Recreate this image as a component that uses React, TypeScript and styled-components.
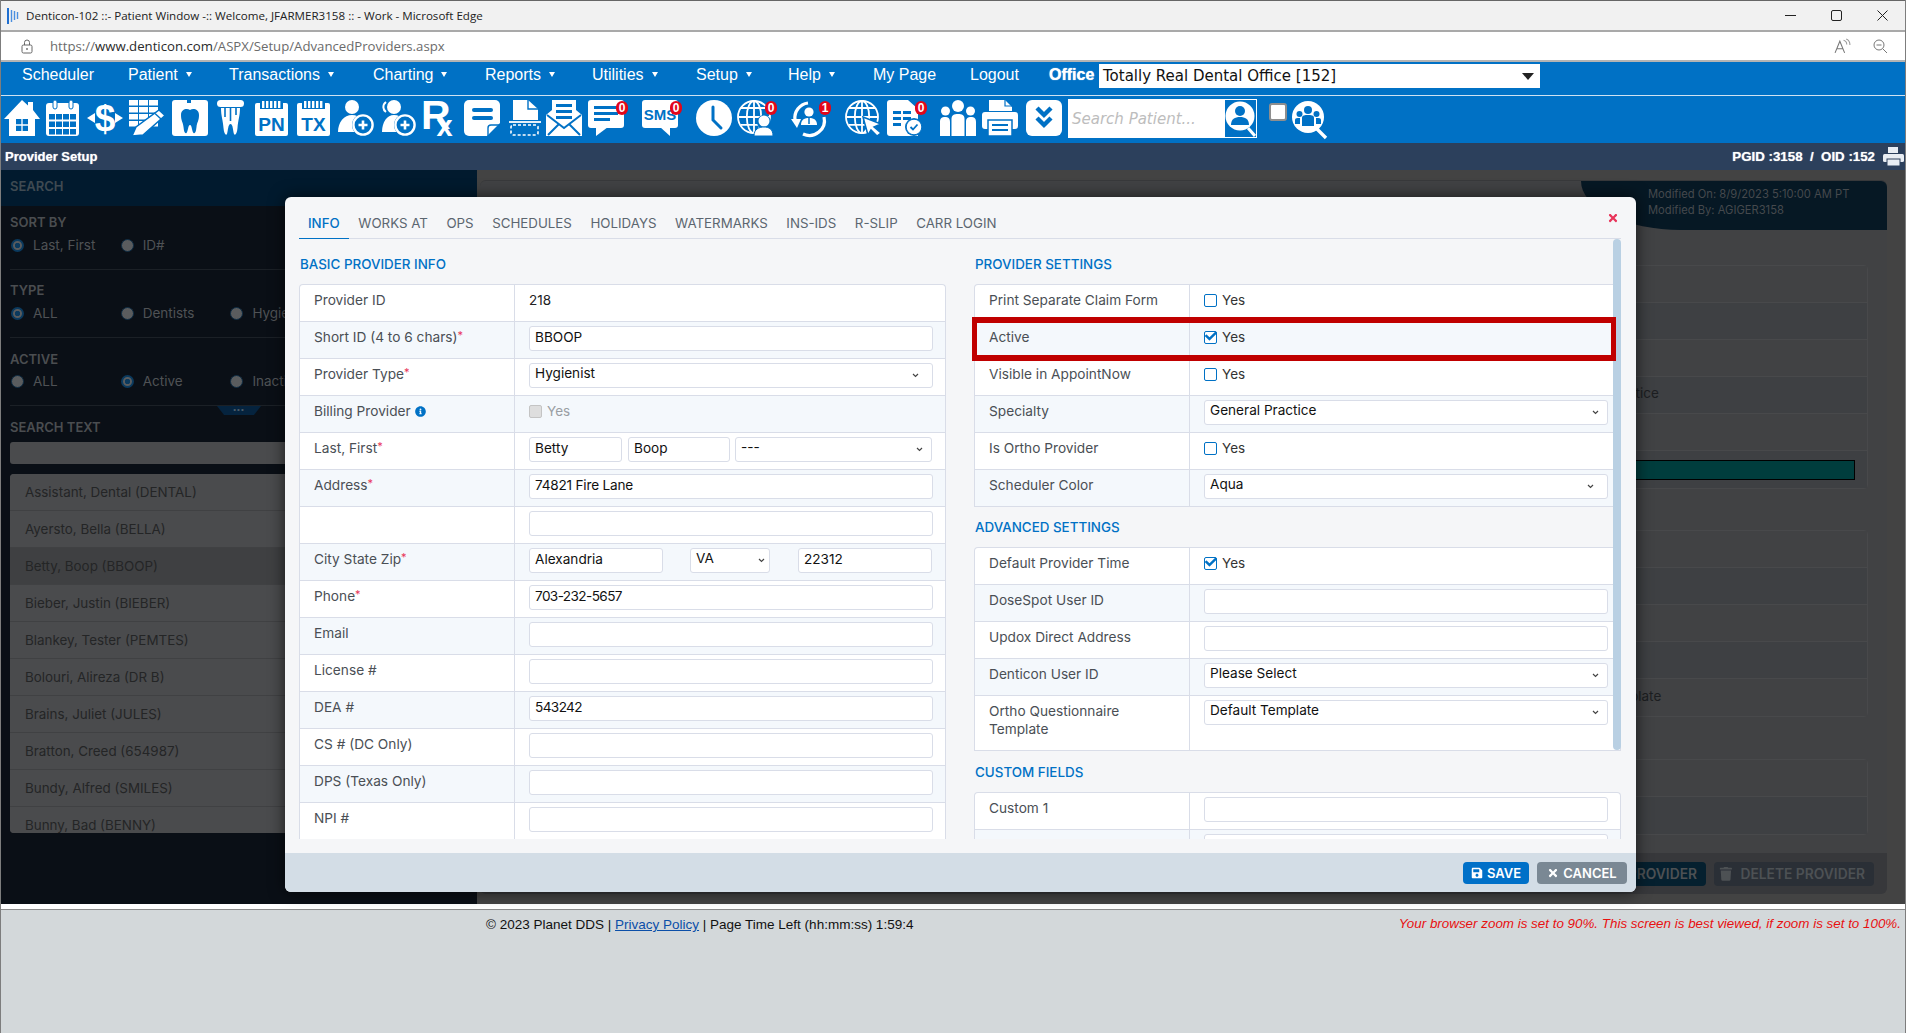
import React from "react";
import styled, { createGlobalStyle } from "styled-components";
import { FaSave, FaTimes, FaInfoCircle, FaTrash, FaCheck } from "react-icons/fa";

const BLUE = "#0071c5";
const UI_FONT = `Inter, "Noto Sans", sans-serif`;

const GlobalStyle = createGlobalStyle`
  html, body {
    margin: 0;
    padding: 0;
    overflow: hidden;
    background: #d3d8da;
  }
  * { box-sizing: border-box; }
`;

const Screen = styled.div`
  position: relative;
  width: 1906px;
  height: 1033px;
  display: flex;
  flex-direction: column;
  overflow: hidden;
  border-left: 1px solid #7d7d7d;
  border-right: 1px solid #7d7d7d;
  font-family: ${UI_FONT};
`;

/* browser chrome */
const TitleBar = styled.div`
  height: 32px;
  flex: none;
  display: flex;
  align-items: center;
  background: #f1f1f1;
  border-top: 1px solid #666;
  border-bottom: 2px solid #a9a9a9;
  padding-left: 6px;
  font: 11.6px "Open Sans", sans-serif;
  color: #222;
`;
const TitleText = styled.span`
  margin-left: 6px;
`;
const WindowControls = styled.div`
  margin-left: auto;
  display: flex;
  align-items: center;
  gap: 35px;
  padding-right: 17px;
`;
const AddressBar = styled.div`
  height: 30px;
  flex: none;
  display: flex;
  align-items: center;
  background: #fff;
  border-bottom: 2px solid #b4b4b4;
  padding-left: 20px;
  font: 13.2px "Open Sans", sans-serif;
  color: #6b6b6b;
`;
const UrlText = styled.span`
  margin-left: 17px;
  b { font-weight: 400; color: #2a2a2a; }
`;
const AddressTools = styled.div`
  margin-left: auto;
  display: flex;
  align-items: center;
  gap: 22px;
  padding-right: 17px;
`;

/* app menu */
const NavBar = styled.div`
  height: 33px;
  flex: none;
  display: flex;
  align-items: center;
  background: ${BLUE};
  padding-left: 21px;
  color: #fff;
  font: 16px "Liberation Sans", Arial, sans-serif;
`;
const NavItem = styled.span<{ $w: number }>`
  width: ${(p) => p.$w}px;
  flex: none;
  display: flex;
  align-items: center;
  margin-top: -8px;
`;
const Caret = styled.i`
  margin-left: 8px;
  width: 0;
  height: 0;
  border-left: 3px solid transparent;
  border-right: 3px solid transparent;
  border-top: 5px solid #fff;
`;
const OfficeLabel = styled.span`
  font-weight: 700;
  width: 50px;
  flex: none;
  margin-top: -8px;
  text-shadow: 0 0 1px #fff;
`;
const OfficeSelect = styled.div`
  width: 441px;
  height: 24px;
  margin-top: -5px;
  background: #fff;
  color: #111;
  display: flex;
  align-items: center;
  justify-content: space-between;
  padding: 0 6px 0 4px;
  font: 15px "DejaVu Sans", sans-serif;
`;
const OfficeArrow = styled.i`
  width: 0;
  height: 0;
  border-left: 6px solid transparent;
  border-right: 6px solid transparent;
  border-top: 7px solid #222;
`;
const NavRule = styled.div`
  height: 1px;
  flex: none;
  background: #cfe2f2;
`;

/* icon toolbar */
const IconBar = styled.div`
  height: 47px;
  flex: none;
  display: flex;
  align-items: center;
  padding-bottom: 3px;
  background: ${BLUE};
`;
const IconSlot = styled.span<{ $x: number; $w: number }>`
  position: relative;
  flex: none;
  display: block;
  height: 36px;
  width: ${(p) => p.$w}px;
  margin-left: ${(p) => p.$x}px;
  svg { display: block; overflow: visible; }
`;
const Badge = styled.span`
  position: absolute;
  right: -4px;
  top: 1px;
  width: 12px;
  height: 14px;
  border-radius: 6px;
  background: #e2061a;
  color: #fff;
  font: 700 12px/14px "Liberation Sans", sans-serif;
  text-align: center;
`;
const PatientSearch = styled.div`
  width: 189px;
  height: 39px;
  margin: 1px 0 0 6px;
  flex: none;
  background: #fff;
  display: flex;
  align-items: center;
  justify-content: space-between;
  padding-left: 4px;
  font: italic 15px "DejaVu Sans", sans-serif;
  color: #bdbdbd;
  svg { display: block; margin: 1px 1px 1px 0; }
`;
const TopCheck = styled.span`
  width: 18px;
  height: 18px;
  margin: -12px 0 0 12px;
  flex: none;
  background: #fff;
  border: 2px solid #8e8e8e;
  border-radius: 3px;
`;

/* page title strip */
const PageHeader = styled.div`
  height: 27px;
  flex: none;
  display: flex;
  align-items: center;
  justify-content: space-between;
  background: #2c405c;
  color: #fff;
  padding: 0 1px 0 4px;
  font: 700 13px "Liberation Sans", Arial, sans-serif;
  text-shadow: 0 0 1px rgba(255, 255, 255, 0.7);
`;
const PageIds = styled.div`
  display: flex;
  align-items: center;
  gap: 8px;
  white-space: pre;
  font-size: 13.3px;
`;

/* dimmed page behind the dialog */
const Workspace = styled.div`
  height: 734px;
  flex: none;
  display: flex;
  background: #434343;
`;
const Sidebar = styled.aside`
  width: 476px;
  flex: none;
  background: #0a0f16;
  overflow: hidden;
`;
const SidebarHead = styled.div`
  height: 36px;
  background: #011a2e;
  color: #3f4a52;
  display: flex;
  align-items: center;
  padding: 0 0 4px 9px;
  font-size: 13px;
  font-weight: 600;
`;
const FilterBlock = styled.div<{ $top: number; $gap?: number }>`
  position: relative;
  margin-left: 9px;
  padding: ${(p) => p.$top}px 0 14px;
  border-bottom: 1px solid #1b2026;
`;
const FilterLabel = styled.div`
  height: 16px;
  line-height: 16px;
  font-size: 13px;
  font-weight: 600;
  color: #4a4d50;
`;
const RadioRow = styled.div<{ $gap: number }>`
  margin-top: ${(p) => p.$gap}px;
  height: 20px;
  display: grid;
  grid-template-columns: repeat(3, 109.7px);
  margin-left: 1px;
`;
const RadioItem = styled.span`
  display: flex;
  align-items: center;
  gap: 9px;
  font-size: 13.5px;
  color: #4f5255;
  white-space: nowrap;
`;
const RadioDot = styled.i<{ $on?: boolean }>`
  width: 13px;
  height: 13px;
  border-radius: 50%;
  border: ${(p) => (p.$on ? "2px solid #0b3a5e" : "1px solid #0e2c44")};
  background: ${(p) => (p.$on ? "radial-gradient(circle, #0b3a5e 0 2.5px, #5a5c5e 3px)" : "#5a5c5e")};
  flex: none;
`;
const MoreHandle = styled.div`
  position: absolute;
  left: 207px;
  bottom: -10px;
  width: 44px;
  height: 9px;
  background: #05233e;
  clip-path: polygon(0 0, 100% 0, 84% 100%, 16% 100%);
  color: #4d5c69;
  font: 8px/7px "Liberation Sans", sans-serif;
  text-align: center;
  letter-spacing: 1px;
`;
const SearchLabel = styled(FilterLabel)`
  margin: 13px 0 0 9px;
`;
const SearchInput = styled.div`
  margin: 7px 0 0 9px;
  height: 22px;
  width: 458px;
  background: #4a4b4d;
  border-radius: 3px;
`;
const ProviderList = styled.div`
  margin: 10px 0 0 9px;
  width: 458px;
  height: 359px;
  overflow: hidden;
  border-radius: 4px;
  background: #4a4b4d;
`;
const ProviderRow = styled.div<{ $selected?: boolean }>`
  height: 37px;
  display: flex;
  align-items: center;
  padding: 0 0 1px 15px;
  font-size: 13.4px;
  color: #242526;
  border-bottom: 1px solid #404143;
  background: ${(p) => (p.$selected ? "#3f4042" : "#4a4b4d")};
`;

const MainPanel = styled.main`
  width: 1407px;
  height: 714px;
  margin: 10px 0 0 3px;
  flex: none;
  display: flex;
  flex-direction: column;
  background: #414244;
  border-radius: 6px;
  border-top: 1px solid #38393b;
`;
const PanelHead = styled.div`
  align-self: flex-end;
  width: 306px;
  height: 49px;
  background: #061824;
  border-radius: 0 6px 0 0;
  border-bottom-left-radius: 100px 49px;
  padding: 5px 0 0 67px;
  color: #45494d;
  font-size: 11.2px;
  line-height: 16px;
`;
const GhostGroup = styled.div<{ $top: number }>`
  margin: ${(p) => p.$top}px 19px 0 20px;
  border: 1px solid #48494b;
  border-radius: 4px;
`;
const GhostRow = styled.div<{ $odd?: boolean }>`
  height: 37px;
  display: grid;
  grid-template-columns: 1052px 1fr;
  align-items: center;
  background: ${(p) => (p.$odd ? "#3e4043" : "#414244")};
  border-bottom: 1px solid #48494b;
  font-size: 13.5px;
  color: #1c1e21;
  &:last-child { border-bottom: 0; }
`;
const ColorBar = styled.div`
  grid-column: 2;
  width: 302px;
  height: 20px;
  background: #003d3d;
  border: 1px solid #000;
`;
const GhostValue = styled.span`
  grid-column: 2;
  white-space: nowrap;
  padding-bottom: 4px;
`;
const PanelFoot = styled.div`
  margin-top: auto;
  height: 41px;
  display: flex;
  justify-content: flex-end;
  align-items: center;
  gap: 8px;
  padding: 1px 13px 0 0;
  background: #37383b;
  border-radius: 0 0 6px 6px;
`;
const GhostButton = styled.div<{ $w: number; $bg: string }>`
  width: ${(p) => p.$w}px;
  height: 24px;
  border-radius: 4px;
  background: ${(p) => p.$bg};
  color: #4d5154;
  font-size: 13.8px;
  font-weight: 600;
  display: flex;
  align-items: center;
  justify-content: flex-end;
  gap: 8px;
  padding-right: 9px;
  white-space: nowrap;
`;

/* site footer */
const SiteFoot = styled.footer`
  flex: 1;
  background: #d3d8da;
  border-top: 5px solid #fff;
  position: relative;
  font: 13.5px "Liberation Sans", Arial, sans-serif;
  color: #111;
`;
const FootRule = styled.div`
  height: 1px;
  background: #8a8a8a;
`;
const FootRow = styled.div`
  display: flex;
  align-items: center;
  justify-content: space-between;
  padding: 7px 4px 0 485px;
  a { color: #0b4fa8; }
`;
const ZoomNote = styled.span`
  color: #e81010;
  font-style: italic;
  font-size: 13.4px;
  margin-top: -2px;
`;

/* provider dialog */
const Modal = styled.section`
  position: absolute;
  left: 284px;
  top: 197px;
  width: 1351px;
  height: 695px;
  display: flex;
  flex-direction: column;
  background: #f5f6f8;
  border-radius: 6px;
  box-shadow: 0 0 16px rgba(0, 0, 0, 0.65);
`;
const CloseX = styled.span`
  position: absolute;
  right: 17px;
  top: 15px;
  color: #e8345a;
  font-size: 12px;
  line-height: 12px;
`;
const TabBar = styled.nav`
  height: 42px;
  flex: none;
  margin: 0 15px 0 14px;
  padding-top: 12px;
  display: flex;
  border-bottom: 1px solid #d9dde8;
`;
const Tab = styled.span<{ $active?: boolean }>`
  height: 30px;
  padding: 6px 9px 0;
  margin-right: 0.6px;
  font-size: 13.3px;
  line-height: 16px;
  white-space: nowrap;
  color: ${(p) => (p.$active ? BLUE : "#5c6670")};
  font-weight: ${(p) => (p.$active ? 500 : 400)};
  border-bottom: ${(p) => (p.$active ? `1px solid ${BLUE}` : "0")};
`;
const ModalBody = styled.div`
  position: relative;
  height: 600px;
  flex: none;
  overflow: hidden;
  margin: 0 15px 0 14px;
  display: grid;
  grid-template-columns: 647px 647px;
  column-gap: 28px;
`;
const Pane = styled.div``;
const SectionTitle = styled.h3<{ $top?: number; $h?: number }>`
  margin: ${(p) => p.$top ?? 0}px 0 0;
  height: ${(p) => p.$h ?? 40}px;
  display: flex;
  align-items: center;
  padding-left: 1px;
  font-size: 13.4px;
  font-weight: 500;
  color: ${BLUE};
`;
const FormTable = styled.div`
  background: #fff;
  border: 1px solid #d9dde8;
  border-bottom: 0;
  border-radius: 4px 4px 0 0;
`;
const FormRowBox = styled.div<{ $h?: number }>`
  height: ${(p) => p.$h ?? 37}px;
  display: grid;
  grid-template-columns: 215px 1fr;
  border-bottom: 1px solid #d9dde8;
  &:nth-child(even) { background: #f4f8fc; }
`;
const RowLabel = styled.div`
  border-right: 1px solid #d9dde8;
  padding: 6px 8px 0 14px;
  font-size: 13.7px;
  line-height: 18px;
  color: #4a4f55;
`;
const Req = styled.span`
  color: #e8345a;
  font-size: 11px;
  line-height: 0;
  vertical-align: 3px;
`;
const RowValue = styled.div`
  display: flex;
  align-items: flex-start;
  padding: 4px 12px 0 14px;
  font-size: 13.5px;
  color: #222;
`;
const PlainValue = styled.span`
  padding-top: 2px;
  line-height: 18px;
`;
const TextField = styled.div<{ $w?: number; $ml?: number; $tight?: number }>`
  height: 25px;
  flex: ${(p) => (p.$w ? "none" : "1")};
  width: ${(p) => (p.$w ? `${p.$w}px` : "auto")};
  margin-left: ${(p) => p.$ml ?? 0}px;
  background: #fff;
  border: 1px solid #d9dde8;
  border-radius: 3px;
  padding: 0 5px;
  line-height: 21px;
  font-size: 13.6px;
  letter-spacing: ${(p) => p.$tight ?? 0}px;
  color: #111;
  white-space: nowrap;
  overflow: hidden;
`;
const SelectField = styled(TextField)<{ $arrow: number }>`
  display: flex;
  justify-content: space-between;
  line-height: 19px;
  padding-right: ${(p) => p.$arrow}px;
  svg { flex: none; margin-top: 9px; }
`;
const CheckRow = styled.label<{ $off?: boolean }>`
  display: flex;
  align-items: center;
  gap: 5px;
  height: 22px;
  color: ${(p) => (p.$off ? "#9a9ea3" : "#333")};
`;
const CheckBox = styled.span<{ $off?: boolean }>`
  position: relative;
  width: 13px;
  height: 13px;
  flex: none;
  border: 1px solid ${(p) => (p.$off ? "#c4c4c4" : BLUE)};
  border-radius: 2px;
  background: ${(p) => (p.$off ? "#dedede" : "#fff")};
  svg {
    position: absolute;
    left: 0;
    top: -2px;
    color: ${BLUE};
    font-size: 12px;
  }
`;
const Scrollbar = styled.div`
  position: absolute;
  left: 1314px;
  top: 0;
  width: 8px;
  height: 511px;
  background: #b9d0e3;
  border-radius: 4px;
`;
const Callout = styled.div`
  position: absolute;
  left: 673px;
  top: 78px;
  width: 644px;
  height: 44px;
  border: 6px solid #c00000;
  border-left-width: 5px;
  border-right-width: 5px;
`;
const ModalFoot = styled.div`
  margin-top: 14px;
  flex: 1;
  display: flex;
  justify-content: flex-end;
  align-items: flex-start;
  gap: 8px;
  padding: 9px 9px 0 0;
  background: #d3dde6;
  border-radius: 0 0 6px 6px;
`;
const ActionButton = styled.button<{ $bg: string; $w: number }>`
  width: ${(p) => p.$w}px;
  height: 22px;
  border: 0;
  border-radius: 4px;
  background: ${(p) => p.$bg};
  color: #fff;
  font: 600 13px ${UI_FONT};
  display: flex;
  align-items: center;
  justify-content: center;
  gap: 4px;
  padding: 0;
  svg { font-size: 12px; }
`;

const W = "#fff";

const Svg: React.FC<{ w: number; h?: number; children: React.ReactNode }> = ({ w, h = 36, children }) => (
  <svg width={w} height={h} viewBox={`0 0 ${w} ${h}`}>
    {children}
  </svg>
);

const boldText = { fontFamily: "Liberation Sans, Arial, sans-serif", fontWeight: 700 } as const;

const CalendarCells = () => (
  <>
    {[14, 21.5, 29].map((y) =>
      [3, 10, 17, 24].map((x) => <rect key={`${x}-${y}`} x={x} y={y} width="6" height="5.5" fill={BLUE} />)
    )}
  </>
);

const CombDoc: React.FC<{ label: string }> = ({ label }) => (
  <Svg w={33}>
    <rect y="3" width="33" height="33" rx="2" fill={W} />
    <rect x="5" y="0" width="23" height="9" fill={BLUE} />
    {[7, 11, 15, 19, 23].map((x) => (
      <rect key={x} x={x} y="1" width="2.4" height="7" fill={W} />
    ))}
    <text x="16.5" y="31" textAnchor="middle" fontSize="19" fill={BLUE} style={boldText}>
      {label}
    </text>
  </Svg>
);

const Globe: React.FC<{ r?: number }> = ({ r = 16 }) => (
  <g fill="none" stroke={W} strokeWidth="1.8">
    <circle cx={r + 1} cy={r + 1} r={r} />
    <ellipse cx={r + 1} cy={r + 1} rx={r * 0.45} ry={r} />
    <path d={`M${r + 1} 1V${2 * r + 1}M1 ${r + 1}H${2 * r + 1}M4 ${r * 0.5}H${2 * r - 2}M4 ${r * 1.55}H${2 * r - 2}`} />
  </g>
);

const HomeIcon = () => (
  <Svg w={36}>
    <path d="M18 0L24 5.5V2H29V10L36 19H31V36H5V19H0Z" fill={W} />
    <path d="M12 19H24V31H12Z" fill={BLUE} />
    <path d="M18 19V31M12 25H24" stroke={W} strokeWidth="1.3" />
  </Svg>
);
const CalendarIcon = () => (
  <Svg w={33}>
    <rect y="3" width="33" height="33" rx="3" fill={W} />
    <CalendarCells />
    <rect x="2" y="5" width="29" height="6" fill={W} />
    <rect x="7" y="0" width="4" height="9" rx="2" fill={W} stroke={BLUE} />
    <rect x="23" y="0" width="4" height="9" rx="2" fill={W} stroke={BLUE} />
  </Svg>
);
const DollarIcon = () => (
  <Svg w={36}>
    <text x="18" y="31" textAnchor="middle" fontSize="37" fill={W} style={boldText}>
      $
    </text>
    <path d="M0 18L8 13V23ZM36 18L28 13V23Z" fill={W} />
  </Svg>
);
const EditListIcon = () => (
  <Svg w={36}>
    {[0, 7, 14, 21].map((y) =>
      [0, 10, 20].map((x) => <rect key={`${x}-${y}`} x={x} y={y} width="9" height="5.5" fill={W} />)
    )}
    <path d="M30 10L36 15.5L14 35L3 36L7 27Z" fill={W} stroke={BLUE} strokeWidth="1.5" />
    <path d="M26 13.5L32 19" stroke={BLUE} strokeWidth="1.4" />
  </Svg>
);
const ToothBoxIcon = () => (
  <Svg w={36}>
    <rect y="0" width="36" height="36" rx="3" fill={W} />
    <rect x="15" y="0" width="4" height="3" fill={BLUE} />
    <path
      d="M9 15C9 9 15 8 18 10C21 8 27 9 27 15C27 21 25 22 24.5 27C24 32 23 34 21.5 33C20 32 20 25 18 25C16 25 16 32 14.5 33C13 34 12 32 11.5 27C11 22 9 21 9 15Z"
      fill={BLUE}
    />
  </Svg>
);
const CrownIcon = () => (
  <Svg w={27}>
    <rect width="27" height="7" rx="3.5" fill={W} />
    <path
      d="M4 8H23C23 16 21 20 20.5 28C20 34 18 36 17 34C16 31 16 24 13.5 24C11 24 11 31 10 34C9 36 7 34 6.5 28C6 20 4 16 4 8Z"
      fill={W}
    />
    <path d="M8 8V17M13.5 8V21M19 8V15" stroke={BLUE} strokeWidth="1.6" />
  </Svg>
);
const PlusBadge: React.FC<{ cx: number; cy: number }> = ({ cx, cy }) => (
  <g>
    <circle cx={cx} cy={cy} r="11" fill={BLUE} />
    <circle cx={cx} cy={cy} r="9.6" fill={BLUE} stroke={W} strokeWidth="2.4" />
    <path d={`M${cx} ${cy - 4.5}V${cy + 4.5}M${cx - 4.5} ${cy}H${cx + 4.5}`} stroke={W} strokeWidth="2.6" />
  </g>
);
const UserPlusIcon = () => (
  <Svg w={36}>
    <circle cx="14" cy="7" r="7" fill={W} />
    <path d="M0 32C0 22 6 15 14 15C22 15 28 22 28 32Z" fill={W} />
    <PlusBadge cx={25} cy={25} />
  </Svg>
);
const UsersPlusIcon = () => (
  <Svg w={36}>
    <circle cx="14" cy="7" r="7" fill={W} />
    <path d="M2 32C2 22 7 15 14 15C22 15 28 22 28 32Z" fill={W} />
    <path d="M6 2C2 5 3 10 6 12" fill="none" stroke={W} strokeWidth="2" />
    <PlusBadge cx={25} cy={25} />
  </Svg>
);
const RxIcon = () => (
  <Svg w={34}>
    <text x="-2" y="29" fontSize="41" fill={W} style={boldText}>
      R
      <tspan dy="7" dx="-14" fontSize="29">
        x
      </tspan>
    </text>
  </Svg>
);
const NoteIcon = () => (
  <Svg w={36}>
    <path d="M5 0H31A5 5 0 0 1 36 5V23L23 36H5A5 5 0 0 1 0 31V5A5 5 0 0 1 5 0Z" fill={W} />
    <rect x="8" y="8" width="21" height="4" rx="2" fill={BLUE} />
    <rect x="8" y="16" width="21" height="4" rx="2" fill={BLUE} />
    <path d="M24 36V28C24 26 25 25 27 25H36" fill="none" stroke={BLUE} strokeWidth="1.4" />
  </Svg>
);
const ScanIcon = () => (
  <Svg w={32}>
    <path d="M4 0H19L29 9V20H4Z" fill={W} />
    <path d="M19 0V9H29" fill="none" stroke={BLUE} strokeWidth="1.4" />
    <path d="M0 22H32" stroke={W} strokeWidth="1.8" />
    <rect x="2" y="25" width="27" height="10" rx="2" fill="none" stroke={W} strokeWidth="1.6" strokeDasharray="3 2" />
  </Svg>
);
const MailIcon = () => (
  <Svg w={36}>
    <path d="M0 15L6 10V0H30V10L36 15V36H0Z" fill={W} />
    <path d="M10 4H26V7H10ZM10 10H26V13H10ZM10 16H26V19H10Z" fill={BLUE} />
    <path d="M1 15L18 28L35 15M2 35L13 24M34 35L23 24" fill="none" stroke={BLUE} strokeWidth="2" />
  </Svg>
);
const ChatIcon = () => (
  <Svg w={36}>
    <rect width="36" height="28" rx="3" fill={W} />
    <path d="M8 27L8 36L20 27Z" fill={W} />
    <path d="M6 6H30V9H6ZM6 12H30V15H6ZM6 18H22V21H6Z" fill={BLUE} />
  </Svg>
);
const SmsIcon = () => (
  <Svg w={36}>
    <rect width="36" height="28" rx="3" fill={W} />
    <path d="M18 27L28 36V27Z" fill={W} />
    <text x="18" y="20" textAnchor="middle" fontSize="15" fill={BLUE} style={boldText}>
      SMS
    </text>
  </Svg>
);
const ClockIcon = () => (
  <Svg w={36}>
    <circle cx="18" cy="18" r="18" fill={W} />
    <path d="M17 7V20L25 28" fill="none" stroke={BLUE} strokeWidth="3" strokeLinecap="round" />
  </Svg>
);
const GlobePersonIcon = () => (
  <Svg w={36}>
    <Globe />
    <circle cx="27" cy="22" r="7" fill={BLUE} />
    <circle cx="27" cy="21" r="5.5" fill={W} />
    <path d="M17 36C17 29 22 27 27 27C32 27 36 29 36 36Z" fill={W} stroke={BLUE} />
  </Svg>
);
const HistoryIcon = () => (
  <Svg w={36}>
    <g fill="none" stroke={W} strokeWidth="3.2">
      <path d="M17 3A15 15 0 0 0 4 20" />
      <path d="M12 34A15 15 0 0 0 33 17" />
    </g>
    <path d="M0 19H10L6 28Z" fill={W} />
    <circle cx="18" cy="12" r="4.6" fill={W} />
    <path d="M10 25C10 19 14 18 18 18C22 18 26 19 26 25Z" fill={W} />
    <path d="M18 18V24" stroke={BLUE} strokeWidth="1.5" />
  </Svg>
);
const GlobeCursorIcon = () => (
  <Svg w={36}>
    <Globe />
    <path d="M18 17L36 24L29 27L36 33L32 36L26 30L23 35Z" fill={W} stroke={BLUE} strokeWidth="1.5" />
  </Svg>
);
const DocCheckIcon = () => (
  <Svg w={36}>
    <path d="M3 0H21L31 9V36H3A3 3 0 0 1 0 33V3A3 3 0 0 1 3 0Z" fill={W} />
    <path d="M6 11H14V14H6ZM16 11H24V14H16ZM6 17H14V20H6ZM16 17H24V20H16ZM6 23H14V26H6Z" fill={BLUE} />
    <circle cx="27" cy="27" r="9" fill={BLUE} />
    <circle cx="27" cy="27" r="7.8" fill={W} stroke={BLUE} strokeWidth="1" />
    <path d="M23.5 27L26 29.5L30.5 24.5" fill="none" stroke={BLUE} strokeWidth="1.8" />
  </Svg>
);
const FamilyIcon = () => (
  <Svg w={36}>
    <circle cx="5.5" cy="11" r="4.5" fill={W} />
    <circle cx="30.5" cy="11" r="4.5" fill={W} />
    <circle cx="18" cy="6" r="6" fill={W} />
    <path d="M0 36V22C0 18 2 17 5 17C8 17 10 18 10 22V36ZM26 36V22C26 18 28 17 31 17C34 17 36 18 36 22V36Z" fill={W} />
    <path d="M11.5 36V19C11.5 15 14 14 18 14C22 14 24.5 15 24.5 19V36Z" fill={W} />
  </Svg>
);
const PrinterIcon = () => (
  <Svg w={36}>
    <path d="M7 0H23L30 7V11H7Z" fill={W} />
    <path d="M23 0V6H30" fill="none" stroke={BLUE} strokeWidth="1.2" />
    <rect y="12" width="36" height="17" rx="3" fill={W} />
    <rect x="6" y="20" width="24" height="16" fill={W} stroke={BLUE} strokeWidth="1.5" />
    <path d="M10 25H26M10 30H26" stroke={BLUE} strokeWidth="2" />
  </Svg>
);
const ChevronsIcon = () => (
  <Svg w={36}>
    <rect width="36" height="36" rx="6" fill={W} />
    <path d="M11 8L18 15L25 8M11 18L18 25L25 18" fill="none" stroke={BLUE} strokeWidth="4.4" />
  </Svg>
);
const PatientSearchIcon = () => (
  <svg width="31" height="37" viewBox="0 0 31 37">
    <rect width="31" height="37" fill={BLUE} />
    <circle cx="15" cy="16" r="14.5" fill={W} />
    <path d="M23 28L30 36" stroke={W} strokeWidth="3" />
    <circle cx="15" cy="11" r="5" fill={BLUE} />
    <path d="M6 25C6 19 10 17 15 17C20 17 24 19 24 25Z" fill={BLUE} />
  </svg>
);
const GroupSearchIcon = () => (
  <svg width="37" height="39" viewBox="0 0 37 39">
    <circle cx="16" cy="17" r="16" fill={W} />
    <path d="M25 29L34 38" stroke={W} strokeWidth="3.4" />
    <g fill={BLUE}>
      <circle cx="16" cy="10" r="4" />
      <circle cx="7.5" cy="14" r="3" />
      <circle cx="24.5" cy="14" r="3" />
      <path d="M10 26V18C10 15 13 15 16 15C19 15 22 15 22 18V26Z" />
      <path d="M3 24V20C3 18 5 18 8 18V24ZM29 24V20C29 18 27 18 24 18V24Z" />
    </g>
  </svg>
);

const toolbar: { x: number; w: number; icon: React.ReactNode; badge?: string }[] = [
  { x: 3, w: 36, icon: <HomeIcon /> },
  { x: 6, w: 33, icon: <CalendarIcon /> },
  { x: 8, w: 36, icon: <DollarIcon /> },
  { x: 6, w: 36, icon: <EditListIcon /> },
  { x: 7, w: 36, icon: <ToothBoxIcon /> },
  { x: 9, w: 27, icon: <CrownIcon /> },
  { x: 11, w: 33, icon: <CombDoc label="PN" /> },
  { x: 9, w: 33, icon: <CombDoc label="TX" /> },
  { x: 8, w: 36, icon: <UserPlusIcon /> },
  { x: 6, w: 36, icon: <UsersPlusIcon /> },
  { x: 7, w: 34, icon: <RxIcon /> },
  { x: 7, w: 36, icon: <NoteIcon /> },
  { x: 9, w: 32, icon: <ScanIcon /> },
  { x: 5, w: 36, icon: <MailIcon /> },
  { x: 6, w: 36, icon: <ChatIcon />, badge: "0" },
  { x: 18, w: 36, icon: <SmsIcon />, badge: "0" },
  { x: 18, w: 36, icon: <ClockIcon /> },
  { x: 5, w: 36, icon: <GlobePersonIcon />, badge: "0" },
  { x: 18, w: 36, icon: <HistoryIcon />, badge: "1" },
  { x: 18, w: 36, icon: <GlobeCursorIcon /> },
  { x: 6, w: 36, icon: <DocCheckIcon />, badge: "0" },
  { x: 17, w: 36, icon: <FamilyIcon /> },
  { x: 6, w: 36, icon: <PrinterIcon /> },
  { x: 8, w: 36, icon: <ChevronsIcon /> },
];

const navItems = [
  { label: "Scheduler", w: 106 },
  { label: "Patient", w: 101, caret: true },
  { label: "Transactions", w: 144, caret: true },
  { label: "Charting", w: 112, caret: true },
  { label: "Reports", w: 107, caret: true },
  { label: "Utilities", w: 104, caret: true },
  { label: "Setup", w: 92, caret: true },
  { label: "Help", w: 85, caret: true },
  { label: "My Page", w: 97 },
  { label: "Logout", w: 79 },
];

const tabs = ["WORKS AT", "OPS", "SCHEDULES", "HOLIDAYS", "WATERMARKS", "INS-IDS", "R-SLIP", "CARR LOGIN"];

const providers = [
  "Assistant, Dental (DENTAL)",
  "Ayersto, Bella (BELLA)",
  "Betty, Boop (BBOOP)",
  "Bieber, Justin (BIEBER)",
  "Blankey, Tester (PEMTES)",
  "Bolouri, Alireza (DR B)",
  "Brains, Juliet (JULES)",
  "Bratton, Creed (654987)",
  "Bundy, Alfred (SMILES)",
  "Bunny, Bad (BENNY)",
];

const Chevron = () => (
  <svg width="7" height="5" viewBox="0 0 7 5">
    <path d="M1 1L3.5 3.5L6 1" fill="none" stroke="#444" strokeWidth="1.2" />
  </svg>
);

const FormRow: React.FC<{ label?: React.ReactNode; req?: boolean; h?: number; extra?: React.ReactNode; children?: React.ReactNode }> = ({
  label,
  req,
  h,
  extra,
  children,
}) => (
  <FormRowBox $h={h}>
    <RowLabel>
      {label}
      {req && <Req>*</Req>}
      {extra}
    </RowLabel>
    <RowValue>{children}</RowValue>
  </FormRowBox>
);

const Select: React.FC<{ value: string; arrow?: number; w?: number; ml?: number }> = ({ value, arrow = 8, w, ml }) => (
  <SelectField $arrow={arrow} $w={w} $ml={ml}>
    {value}
    <Chevron />
  </SelectField>
);

const YesCheck: React.FC<{ on?: boolean; off?: boolean }> = ({ on, off }) => (
  <CheckRow $off={off}>
    <CheckBox $off={off}>{on && <FaCheck />}</CheckBox>
    Yes
  </CheckRow>
);

const RadioGroup: React.FC<{ items: string[]; active: number; gap?: number }> = ({ items, active, gap = 5 }) => (
  <RadioRow $gap={gap}>
    {items.map((item, i) => (
      <RadioItem key={item}>
        <RadioDot $on={i === active} />
        {item}
      </RadioItem>
    ))}
  </RadioRow>
);

export default function App() {
  return (
    <Screen>
      <GlobalStyle />
      <TitleBar>
        <svg width="13" height="16" viewBox="0 0 13 16">
          <path d="M1 0V16" stroke="#1f6fd0" strokeWidth="2" />
          <path d="M4.5 2V14M7.5 3V12M10.5 4V11" stroke="#4a8fe0" strokeWidth="1.4" />
        </svg>
        <TitleText>Denticon-102 ::- Patient Window -:: Welcome, JFARMER3158 :: - Work - Microsoft Edge</TitleText>
        <WindowControls>
          <svg width="11" height="11" viewBox="0 0 11 11">
            <path d="M0 5.5H11" stroke="#222" />
          </svg>
          <svg width="11" height="11" viewBox="0 0 11 11">
            <rect x="0.5" y="0.5" width="10" height="10" rx="1.5" fill="none" stroke="#222" />
          </svg>
          <svg width="11" height="11" viewBox="0 0 11 11">
            <path d="M0.5 0.5L10.5 10.5M10.5 0.5L0.5 10.5" stroke="#222" />
          </svg>
        </WindowControls>
      </TitleBar>
      <AddressBar>
        <svg width="12" height="15" viewBox="0 0 12 15">
          <rect x="1" y="6" width="10" height="8" rx="1.5" fill="none" stroke="#666" />
          <path d="M3.5 6V3.5A2.5 2.5 0 0 1 8.5 3.5V6" fill="none" stroke="#666" />
          <circle cx="6" cy="10" r="0.9" fill="#666" />
        </svg>
        <UrlText>
          https://<b>www.denticon.com</b>/ASPX/Setup/AdvancedProviders.aspx
        </UrlText>
        <AddressTools>
          <svg width="17" height="16" viewBox="0 0 16 15">
            <path d="M1 14L5.5 3L10 14M2.8 10H8.2" fill="none" stroke="#777" />
            <path d="M9 2C11 2.5 12 4 12 6M11.5 1C14 2 15 4 15 6.5" fill="none" stroke="#999" />
          </svg>
          <svg width="15" height="15" viewBox="0 0 15 15">
            <circle cx="6" cy="6" r="5" fill="none" stroke="#777" />
            <path d="M3.5 6H8.5M9.8 9.8L14 14" stroke="#777" />
          </svg>
        </AddressTools>
      </AddressBar>
      <NavBar>
        {navItems.map((item) => (
          <NavItem key={item.label} $w={item.w}>
            {item.label}
            {item.caret && <Caret />}
          </NavItem>
        ))}
        <OfficeLabel>Office</OfficeLabel>
        <OfficeSelect>
          Totally Real Dental Office [152]
          <OfficeArrow />
        </OfficeSelect>
      </NavBar>
      <NavRule />
      <IconBar>
        {toolbar.map((slot, i) => (
          <IconSlot key={i} $x={slot.x} $w={slot.w}>
            {slot.icon}
            {slot.badge && <Badge>{slot.badge}</Badge>}
          </IconSlot>
        ))}
        <PatientSearch>
          Search Patient...
          <PatientSearchIcon />
        </PatientSearch>
        <TopCheck />
        <IconSlot $x={5} $w={37}>
          <GroupSearchIcon />
        </IconSlot>
      </IconBar>
      <PageHeader>
        Provider Setup
        <PageIds>
          PGID :3158 {" "}/ {" "}OID :152
          <svg width="21" height="20" viewBox="0 0 21 20">
            <path d="M5 0H15V6H5Z" fill="#e8edf3" />
            <rect y="7" width="21" height="8" rx="1.5" fill="#e8edf3" />
            <rect x="4" y="12" width="13" height="7" fill="#e8edf3" stroke="#2c405c" />
          </svg>
        </PageIds>
      </PageHeader>
      <Workspace>
        <Sidebar>
          <SidebarHead>SEARCH</SidebarHead>
          <FilterBlock $top={8}>
            <FilterLabel>SORT BY</FilterLabel>
            <RadioGroup items={["Last, First", "ID#"]} active={0} />
          </FilterBlock>
          <FilterBlock $top={12}>
            <FilterLabel>TYPE</FilterLabel>
            <RadioGroup items={["ALL", "Dentists", "Hygienists"]} active={0} />
          </FilterBlock>
          <FilterBlock $top={13}>
            <FilterLabel>ACTIVE</FilterLabel>
            <RadioGroup items={["ALL", "Active", "Inactive"]} active={1} gap={4} />
            <MoreHandle>•••</MoreHandle>
          </FilterBlock>
          <SearchLabel>SEARCH TEXT</SearchLabel>
          <SearchInput />
          <ProviderList>
            {providers.map((name) => (
              <ProviderRow key={name} $selected={name.startsWith("Betty")}>
                {name}
              </ProviderRow>
            ))}
          </ProviderList>
        </Sidebar>
        <MainPanel>
          <PanelHead>
            Modified On: 8/9/2023 5:10:00 AM PT
            <br />
            Modified By: AGIGER3158
          </PanelHead>
          <GhostGroup $top={35}>
            <GhostRow />
            <GhostRow $odd />
            <GhostRow />
            <GhostRow $odd>
              <GhostValue>General Practice</GhostValue>
            </GhostRow>
            <GhostRow />
            <GhostRow $odd>
              <ColorBar />
            </GhostRow>
          </GhostGroup>
          <GhostGroup $top={41}>
            <GhostRow />
            <GhostRow $odd />
            <GhostRow />
            <GhostRow $odd />
            <GhostRow>
              <GhostValue>Default Template</GhostValue>
            </GhostRow>
          </GhostGroup>
          <GhostGroup $top={42}>
            <GhostRow />
            <GhostRow $odd />
          </GhostGroup>
          <PanelFoot>
            <GhostButton $w={140} $bg="#05202f">
              PROVIDER
            </GhostButton>
            <GhostButton $w={160} $bg="#2a2f36">
              <FaTrash />
              DELETE PROVIDER
            </GhostButton>
          </PanelFoot>
        </MainPanel>
      </Workspace>
      <SiteFoot>
        <FootRule />
        <FootRow>
          <span>
            © 2023 Planet DDS | <a href="#privacy">Privacy Policy</a> | Page Time Left (hh:mm:ss) 1:59:4
          </span>
          <ZoomNote>Your browser zoom is set to 90%. This screen is best viewed, if zoom is set to 100%.</ZoomNote>
        </FootRow>
      </SiteFoot>

      <Modal>
        <CloseX>
          <FaTimes />
        </CloseX>
        <TabBar>
          <Tab $active>INFO</Tab>
          {tabs.map((tab) => (
            <Tab key={tab}>{tab}</Tab>
          ))}
        </TabBar>
        <ModalBody>
          <Pane>
            <SectionTitle $top={5}>BASIC PROVIDER INFO</SectionTitle>
            <FormTable>
              <FormRow label="Provider ID">
                <PlainValue>218</PlainValue>
              </FormRow>
              <FormRow label="Short ID (4 to 6 chars)" req>
                <TextField>BBOOP</TextField>
              </FormRow>
              <FormRow label="Provider Type" req>
                <Select value="Hygienist" arrow={13} />
              </FormRow>
              <FormRow
                label="Billing Provider "
                extra={<FaInfoCircle size={11} color={BLUE} style={{ verticalAlign: -1 }} />}
              >
                <YesCheck off />
              </FormRow>
              <FormRow label="Last, First" req>
                <TextField $w={93}>Betty</TextField>
                <TextField $w={102} $ml={6}>
                  Boop
                </TextField>
                <Select value="---" w={197} ml={5} />
              </FormRow>
              <FormRow label="Address" req>
                <TextField $tight={-0.2}>74821 Fire Lane</TextField>
              </FormRow>
              <FormRow>
                <TextField />
              </FormRow>
              <FormRow label="City State Zip" req>
                <TextField $w={134}>Alexandria</TextField>
                <Select value="VA" w={80} ml={27} arrow={4} />
                <TextField $w={134} $ml={28}>
                  22312
                </TextField>
              </FormRow>
              <FormRow label="Phone" req>
                <TextField $tight={-0.6}>703-232-5657</TextField>
              </FormRow>
              <FormRow label="Email">
                <TextField />
              </FormRow>
              <FormRow label="License #">
                <TextField />
              </FormRow>
              <FormRow label="DEA #">
                <TextField $tight={-0.6}>543242</TextField>
              </FormRow>
              <FormRow label="CS # (DC Only)">
                <TextField />
              </FormRow>
              <FormRow label="DPS (Texas Only)">
                <TextField />
              </FormRow>
              <FormRow label="NPI #">
                <TextField />
              </FormRow>
            </FormTable>
          </Pane>
          <Pane>
            <SectionTitle $top={5}>PROVIDER SETTINGS</SectionTitle>
            <FormTable>
              <FormRow label="Print Separate Claim Form">
                <YesCheck />
              </FormRow>
              <FormRow label="Active">
                <YesCheck on />
              </FormRow>
              <FormRow label="Visible in AppointNow">
                <YesCheck />
              </FormRow>
              <FormRow label="Specialty">
                <Select value="General Practice" />
              </FormRow>
              <FormRow label="Is Ortho Provider">
                <YesCheck />
              </FormRow>
              <FormRow label="Scheduler Color">
                <Select value="Aqua" arrow={13} />
              </FormRow>
            </FormTable>
            <SectionTitle>ADVANCED SETTINGS</SectionTitle>
            <FormTable>
              <FormRow label="Default Provider Time">
                <YesCheck on />
              </FormRow>
              <FormRow label="DoseSpot User ID">
                <TextField />
              </FormRow>
              <FormRow label="Updox Direct Address">
                <TextField />
              </FormRow>
              <FormRow label="Denticon User ID">
                <Select value="Please Select" />
              </FormRow>
              <FormRow
                label={
                  <>
                    Ortho Questionnaire
                    <br />
                    Template
                  </>
                }
                h={55}
              >
                <Select value="Default Template" />
              </FormRow>
            </FormTable>
            <SectionTitle $h={41}>CUSTOM FIELDS</SectionTitle>
            <FormTable>
              <FormRow label="Custom 1">
                <TextField />
              </FormRow>
              <FormRow label="Custom 2">
                <TextField />
              </FormRow>
            </FormTable>
          </Pane>
          <Scrollbar />
          <Callout />
        </ModalBody>
        <ModalFoot>
          <ActionButton $bg="#0070c8" $w={66}>
            <FaSave />
            SAVE
          </ActionButton>
          <ActionButton $bg="#7a8894" $w={90}>
            <FaTimes />
            CANCEL
          </ActionButton>
        </ModalFoot>
      </Modal>
    </Screen>
  );
}
